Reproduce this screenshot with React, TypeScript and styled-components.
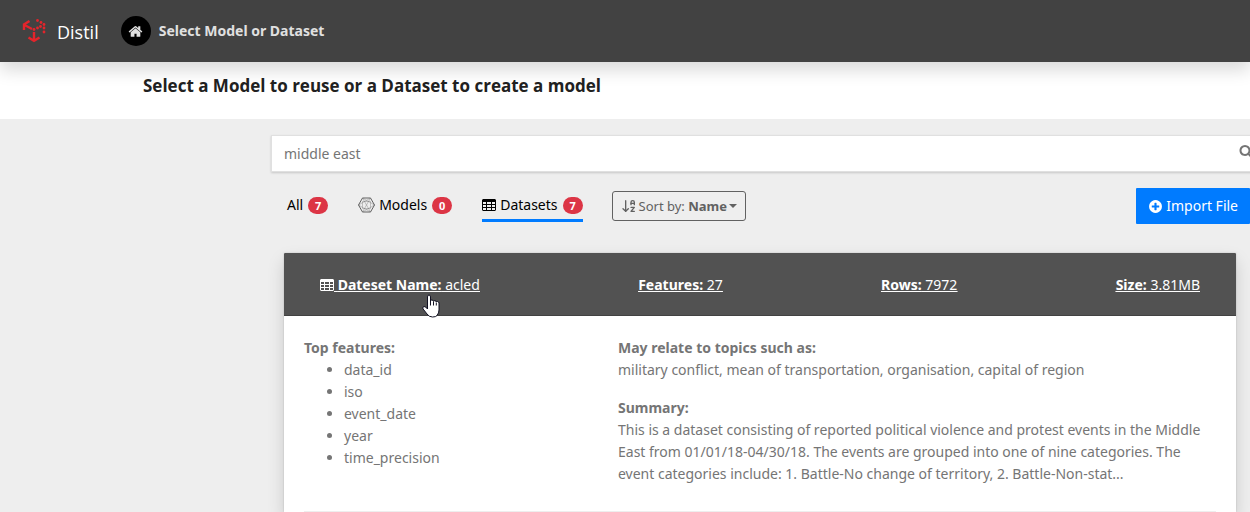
import React from "react";
import styled, { createGlobalStyle, css } from "styled-components";
import { ArrowDownAZ } from "lucide-react";

const Global = createGlobalStyle`
  *, *::before, *::after { box-sizing: border-box; }
  body {
    margin: 0;
    background: #eeeeee;
    color: #757575;
    font-family: "Noto Sans", "Open Sans", sans-serif;
    font-size: 14px;
    line-height: 22px;
    overflow-x: hidden;
  }
  button, input { font: inherit; }
`;

const Navbar = styled.header`
  position: relative;
  display: flex;
  align-items: center;
  height: 62px;
  padding: 0 22px;
  background: #424242;
  box-shadow: 0 8px 16px rgba(0, 0, 0, 0.15);
`;

const Brand = styled.a`
  display: flex;
  align-items: center;
  gap: 11px;
  margin-right: 22px;
  color: #fff;
  font-family: "Open Sans", sans-serif;
  font-size: 18px;
  line-height: 24px;
  text-decoration: none;
`;

const BrandName = styled.span`
  padding-top: 2px;
`;

const Crumb = styled.a`
  display: flex;
  align-items: center;
  gap: 8px;
  color: #e0e0e0;
  font-weight: 700;
  text-decoration: none;
`;

const HomeBadge = styled.span`
  display: grid;
  place-items: center;
  width: 30px;
  height: 30px;
  border-radius: 50%;
  background: #000;
`;

const TitleBar = styled.section`
  padding: 12px 143px 21px;
  background: #fff;
`;

const Title = styled.h1`
  margin: 0;
  color: #212121;
  font-family: "Open Sans", sans-serif;
  font-size: 17px;
  line-height: 24px;
  font-weight: 700;
`;

const Content = styled.main`
  padding: 16px 0 0 271px;
`;

const SearchBox = styled.form`
  display: flex;
  align-items: center;
  margin-right: -16px;
  padding: 0 12px;
  height: 37px;
  border: 1px solid #e0e0e0;
  background: #fff;
  box-shadow: 0 1px 2px rgba(0, 0, 0, 0.16);
  color: #757575;
`;

const SearchInput = styled.input`
  flex: 1;
  min-width: 0;
  padding: 0;
  border: 0;
  outline: 0;
  background: transparent;
  color: #757575;
`;

const IconButton = styled.button`
  display: flex;
  padding: 0 0 6px;
  border: 0;
  background: transparent;
  color: #757575;
`;

const Toolbar = styled.div`
  display: flex;
  align-items: center;
  margin-top: 16px;
  padding-left: 16px;
`;

const Tabs = styled.nav`
  display: flex;
  gap: 30px;
  margin-right: 29px;
`;

const Tab = styled.button<{ $active?: boolean }>`
  display: flex;
  align-items: center;
  gap: 4px;
  height: 32px;
  padding: 0;
  border: 0;
  border-bottom: 3px solid ${(p) => (p.$active ? "#007bff" : "transparent")};
  background: transparent;
  color: #000;
`;

const Count = styled.span`
  min-width: 20px;
  height: 17px;
  margin: 1px 0 0 1px;
  border-radius: 10px;
  background: #dc3545;
  color: #fff;
  font-size: 11px;
  line-height: 17px;
  font-weight: 700;
  text-align: center;
`;

const SortButton = styled.button`
  display: flex;
  align-items: center;
  gap: 2px;
  height: 30px;
  padding: 0 8px;
  border: 1px solid #616161;
  border-radius: 3px;
  background: transparent;
  color: #616161;
  font-size: 13px;
`;

const Caret = styled.span`
  border: 4px solid transparent;
  border-top-color: currentColor;
  border-bottom: 0;
`;

const ImportButton = styled.button`
  display: flex;
  align-items: center;
  gap: 3px;
  height: 36px;
  margin-left: auto;
  padding: 0 12px;
  border: 0;
  border-radius: 1px;
  background: #007bff;
  color: #fff;
`;

const Card = styled.article`
  margin: 29px 14px 0 13px;
  background: #fff;
  box-shadow: 0 8px 16px rgba(0, 0, 0, 0.15), 0 0 2px rgba(0, 0, 0, 0.15);
`;

const CardHeader = styled.a`
  display: flex;
  justify-content: space-between;
  padding: 21px 36px 19px;
  border-bottom: 1px solid #424242;
  border-radius: 1px 1px 0 0;
  background: #525252;
  color: #fff;
`;

const Stat = styled.span<{ $pointer?: boolean }>`
  position: relative;
  text-decoration: underline;
  svg { vertical-align: -1px; }
  ${(p) => p.$pointer && css`
    & > svg:last-child {
      position: absolute;
      left: 102px;
      top: 20px;
    }
  `}
`;

const CardBody = styled.div`
  display: grid;
  grid-template-columns: 314px 1fr;
  margin: 0 20px;
  padding: 21px 0 26px;
  border-bottom: 1px solid #eeeeee;
`;

const Label = styled.h2`
  margin: 0;
  font-size: 14px;
  line-height: 22px;
  font-weight: 700;
`;

const FeatureList = styled.ul`
  margin: 0;
  padding-left: 40px;
`;

const Paragraph = styled.p`
  margin: 0 0 16px;
  &:last-child { margin-bottom: 0; }
`;

const PATHS = {
  home: "M1472 992v480q0 26-19 45t-45 19h-384v-384h-256v384h-384q-26 0-45-19t-19-45v-480q0-1 .5-3t.5-3l575-474 575 474q1 2 1 6zm223-69l-62 74q-8 9-21 11h-3q-13 0-21-7l-692-577-692 577q-12 8-24 7-13-2-21-11l-62-74q-8-10-7-23.5t11-21.5l719-599q32-26 76-26t76 26l244 204v-195q0-14 9-23t23-9h192q14 0 23 9t9 23v408l219 182q10 8 11 21.5t-7 23.5z",
  plus: "M1344 960v-128q0-26-19-45t-45-19h-256v-256q0-26-19-45t-45-19h-128q-26 0-45 19t-19 45v256h-256q-26 0-45 19t-19 45v128q0 26 19 45t45 19h256v256q0 26 19 45t45 19h128q26 0 45-19t19-45v-256h256q26 0 45-19t19-45zm320-64q0 209-103 385.5t-279.5 279.5-385.5 103-385.5-103-279.5-279.5-103-385.5 103-385.5 279.5-279.5 385.5-103 385.5 103 279.5 279.5 103 385.5z",
  search: "M1216 832q0-185-131.5-316.5t-316.5-131.5-316.5 131.5-131.5 316.5 131.5 316.5 316.5 131.5 316.5-131.5 131.5-316.5zm512 832q0 52-38 90t-90 38q-54 0-90-38l-343-342q-179 124-399 124-143 0-273.5-55.5t-225-150-150-225-55.5-273.5 55.5-273.5 150-225 225-150 273.5-55.5 273.5 55.5 225 150 150 225 55.5 273.5q0 220-124 399l343 343q37 37 37 90z",
};

const Icon = ({ name, size }: { name: keyof typeof PATHS; size: number }) => (
  <svg width={size} height={size} viewBox="0 0 1792 1792" fill="currentColor" aria-hidden="true">
    <path d={PATHS[name]} />
  </svg>
);

const TableIcon = () => (
  <svg width="14" height="12" viewBox="0 0 14 12" aria-hidden="true">
    <path
      fill="currentColor"
      fillRule="evenodd"
      d="M1 0h12l1 1v10l-1 1H1l-1-1V1zM1 3v2h3V3zm4 0v2h4V3zm5 0v2h3V3zM1 6v2h3V6zm4 0v2h4V6zm5 0v2h3V6zM1 9v2h3V9zm4 0v2h4V9zm5 0v2h3V9z"
    />
  </svg>
);

const ModelIcon = () => (
  <svg width="17" height="16" viewBox="0 0 17 16" fill="none" aria-hidden="true">
    <path d="M4.5 1h8l4 7-4 7h-8l-4-7z" stroke="#616161" />
    <path
      d="M4.500 1l8 14M12.500 1l-8 14M.5 8l12-7M16.500 8l-12-7M.5 8l12 7M16.500 8l-12 7M4.500 4.500h8v7h-8z"
      stroke="#757575"
      strokeWidth=".4"
    />
  </svg>
);

const Logo = () => (
  <svg width="24" height="26" viewBox="0 0 24 26" fill="none" aria-hidden="true">
    <path d="M10 11L2.500 7M2 12V6.500L7.500 3M12 14v8.500M6.500 19.500L12 22.800l5.500-3.300" stroke="#e3242b" strokeWidth="2.400" />
    <g fill="#e3242b">
      <circle cx="12" cy="11.500" r="1.400" />
      <circle cx="15.500" cy="2.500" r="1.400" /><circle cx="19" cy="4.500" r="1.400" />
      <circle cx="22" cy="6.500" r="1.400" /><circle cx="18.500" cy="8.500" r="1.400" />
      <circle cx="15.500" cy="10" r="1.400" /><circle cx="22" cy="10" r="1.400" />
      <circle cx="22" cy="14" r="1.400" />
    </g>
  </svg>
);

const HandCursor = () => (
  <svg width="18" height="24" viewBox="0 0 18 24" aria-hidden="true">
    <path
      d="M5.500 13V3q0-2 1.500-2T8.500 3v4q0-1 1.300-1T11.500 7.500q0-1 1.400-.8T14.300 8q0-.8 1.300-.5T17 9v7q0 3-2 5.500-1 1.500-4.500 1.500-3.500 0-5.500-3L1 14.800Q.4 12.800 2 12.500q1.500-.2 3.500 2.500z"
      fill="#fff"
      stroke="#111122"
      strokeLinejoin="round"
    />
    <path d="M8.500 7v4.500M11.500 8v3.500M14.300 8.500v3" stroke="#111122" />
  </svg>
);

const FEATURES = ["data_id", "iso", "event_date", "year", "time_precision"];

export default function App() {
  return (
    <>
      <Global />
      <Navbar>
        <Brand href="#">
          <Logo />
          <BrandName>Distil</BrandName>
        </Brand>
        <Crumb href="#">
          <HomeBadge><Icon name="home" size={15} /></HomeBadge>
          Select Model or Dataset
        </Crumb>
      </Navbar>
      <TitleBar>
        <Title>Select a Model to reuse or a Dataset to create a model</Title>
      </TitleBar>
      <Content>
        <SearchBox role="search">
          <SearchInput aria-label="Search" defaultValue="middle east" />
          <IconButton type="button" aria-label="Search"><Icon name="search" size={14} /></IconButton>
        </SearchBox>
        <Toolbar>
          <Tabs>
            <Tab>All <Count>7</Count></Tab>
            <Tab><ModelIcon /> Models <Count>0</Count></Tab>
            <Tab $active><TableIcon /> Datasets <Count>7</Count></Tab>
          </Tabs>
          <SortButton>
            <ArrowDownAZ size={16} />
            <span>Sort by: <b>Name</b></span>
            <Caret />
          </SortButton>
          <ImportButton><Icon name="plus" size={15} /> Import File</ImportButton>
        </Toolbar>
        <Card>
          <CardHeader href="#">
            <Stat $pointer><TableIcon /> <b>Dateset Name:</b> acled<HandCursor /></Stat>
            <Stat><b>Features:</b> 27</Stat>
            <Stat><b>Rows:</b> 7972</Stat>
            <Stat><b>Size:</b> 3.81MB</Stat>
          </CardHeader>
          <CardBody>
            <section>
              <Label>Top features:</Label>
              <FeatureList>
                {FEATURES.map((f) => <li key={f}>{f}</li>)}
              </FeatureList>
            </section>
            <section>
              <Label>May relate to topics such as:</Label>
              <Paragraph>military conflict, mean of transportation, organisation, capital of region</Paragraph>
              <Label>Summary:</Label>
              <Paragraph>
                This is a dataset consisting of reported political violence and protest events in the Middle
                East from 01/01/18-04/30/18. The events are grouped into one of nine categories. The
                event categories include: 1. Battle-No change of territory, 2. Battle-Non-stat...
              </Paragraph>
            </section>
          </CardBody>
        </Card>
      </Content>
    </>
  );
}
